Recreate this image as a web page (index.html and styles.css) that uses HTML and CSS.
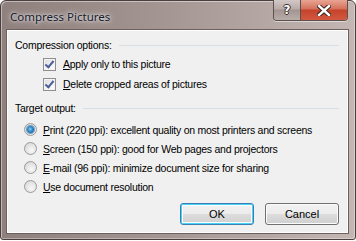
FILE: index.html
```html
<!DOCTYPE html>
<html lang="en">
<head>
  <meta charset="UTF-8" />
  <title>Compress Pictures</title>
  <link rel="stylesheet" href="styles.css">
</head>
<body>
  <div class="window">
    <div class="titlebar">
      <span class="title">Compress Pictures</span>
      <div class="caption-buttons">
        <span class="cap-btn help">?</span>
        <span class="cap-btn close">
          <svg width="14" height="11" viewBox="0 0 14 11">
            <path d="M2 1 L12 10 M12 1 L2 10" stroke="#3b2420" stroke-width="4.4" stroke-linecap="square"/>
            <path d="M2 1 L12 10 M12 1 L2 10" stroke="#fff" stroke-width="2.4" stroke-linecap="square"/>
          </svg>
        </span>
      </div>
    </div>

    <div class="client">
      <div class="group-head"><span>Compression options:</span><span class="rule"></span></div>
      <label class="option check-row">
        <span class="checkbox checked"></span>
        <span><u>A</u>pply only to this picture</span>
      </label>
      <label class="option check-row">
        <span class="checkbox checked"></span>
        <span><u>D</u>elete cropped areas of pictures</span>
      </label>

      <div class="group-head second"><span>Target output:</span><span class="rule"></span></div>
      <div class="radio-list">
        <label class="option radio-row">
          <span class="radio selected"></span>
          <span><u>P</u>rint (220 ppi): excellent quality on most printers and screens</span>
        </label>
        <label class="option radio-row">
          <span class="radio"></span>
          <span><u>S</u>creen (150 ppi): good for Web pages and projectors</span>
        </label>
        <label class="option radio-row">
          <span class="radio"></span>
          <span><u>E</u>-mail (96 ppi): minimize document size for sharing</span>
        </label>
        <label class="option radio-row">
          <span class="radio"></span>
          <span><u>U</u>se document resolution</span>
        </label>
      </div>

      <div class="buttons">
        <button class="btn default">OK</button>
        <button class="btn">Cancel</button>
      </div>
    </div>
  </div>
</body>
</html>
```

FILE: styles.css
```css
* {
  box-sizing: border-box;
  margin: 0;
  padding: 0;
}

body {
  width: 356px;
  height: 241px;
  background: #ffffff;
  font-family: "Liberation Sans", Arial, sans-serif;
  font-size: 10.5px;
  letter-spacing: -0.25px;
  color: #000;
  overflow: hidden;
}

.window {
  width: 356px;
  height: 240px;
  border: 1px solid #4a3f3d;
  border-radius: 6px 6px 3px 3px;
  background: linear-gradient(90deg, #8e807d 0%, #a39592 45%, #c4b7b3 100%);
  box-shadow: inset 1px 1px 0 rgba(255,255,255,0.45), inset -1px -1px 0 rgba(255,255,255,0.35);
  display: flex;
  flex-direction: column;
  padding: 0 7px 6px 6px;
}

.titlebar {
  height: 29px;
  display: flex;
  align-items: flex-start;
  justify-content: space-between;
}

.title {
  margin: 8px 0 0 3px;
  font-family: "Noto Sans", sans-serif;
  font-size: 11.5px;
  letter-spacing: 0;
  color: #15202f;
  text-shadow: 0 0 6px rgba(255,255,255,0.9), 0 0 3px rgba(255,255,255,0.8);
}

.caption-buttons {
  display: flex;
  margin-top: -1px;
  border: 1px solid #5c4f4c;
  border-top: none;
  border-radius: 0 0 4px 4px;
  overflow: hidden;
  box-shadow: 0 1px 0 rgba(255,255,255,0.5);
}

.cap-btn {
  height: 20px;
  display: flex;
  align-items: center;
  justify-content: center;
}

.help {
  width: 27px;
  background: linear-gradient(180deg, #d2c8c5 0%, #b8aba8 45%, #a29491 50%, #b9adaa 100%);
  border-right: 1px solid #5c4f4c;
  font-family: "DejaVu Sans", sans-serif;
  font-weight: bold;
  font-size: 12px;
  letter-spacing: 0;
  color: #fff;
  text-shadow: 1px 0 0 #3b2c2a, -1px 0 0 #3b2c2a, 0 1px 0 #3b2c2a, 0 -1px 0 #3b2c2a;
}

.close {
  width: 46px;
  background: linear-gradient(180deg, #e8a493 0%, #d4705b 45%, #c5432b 50%, #d2583f 100%);
}

.client {
  flex: 1;
  background: #f0f0f0;
  border: 1px solid #ffffff;
  box-shadow: 0 0 0 1px #6d605d;
  padding: 5px 8px 0 7px;
  display: flex;
  flex-direction: column;
}

.group-head {
  display: flex;
  align-items: center;
  height: 18px;
  gap: 7px;
}

.group-head.second {
  margin-top: 4px;
  height: 20px;
}

.rule {
  flex: 1;
  height: 1px;
  background: #d5dfe5;
}

.option {
  display: flex;
  align-items: center;
  white-space: nowrap;
}

.check-row {
  height: 20px;
  padding-left: 28px;
  gap: 7px;
}

.radio-list {
  margin-top: 2px;
  display: flex;
  flex-direction: column;
}

.radio-row {
  height: 19px;
  padding-left: 9px;
  gap: 6px;
}

.checkbox {
  width: 13px;
  height: 13px;
  border: 1px solid #8f8f8f;
  background: linear-gradient(135deg, #dcdcdc 0%, #f6f6f6 70%, #ffffff 100%);
  box-shadow: inset 0 0 0 1px #f4f4f4;
  display: flex;
  align-items: center;
  justify-content: center;
}

.checkbox.checked::after {
  content: "";
  width: 3px;
  height: 7px;
  border: solid #4a5f9b;
  border-width: 0 2px 2px 0;
  transform: translate(0, -1px) rotate(40deg);
}

.radio {
  width: 13px;
  height: 13px;
  border-radius: 50%;
  border: 1px solid #9a9a9a;
  background: radial-gradient(circle at 60% 65%, #f8f8f8 0%, #e3e3e3 55%, #cfcfcf 100%);
  display: flex;
  align-items: center;
  justify-content: center;
}

.radio.selected::after {
  content: "";
  width: 7px;
  height: 7px;
  border-radius: 50%;
  background: radial-gradient(circle at 45% 45%, #8fd0f5 0%, #2b87c9 45%, #0c4c8c 100%);
  box-shadow: 0 0 0 1px #6c9ab9;
}

.buttons {
  display: flex;
  justify-content: flex-end;
  gap: 11px;
  margin-top: 7px;
}

.btn {
  width: 74px;
  height: 22px;
  font-family: "Liberation Sans", Arial, sans-serif;
  font-size: 11px;
  color: #000;
  border: 1px solid #707070;
  border-radius: 3px;
  background: linear-gradient(180deg, #f2f2f2 0%, #ebebeb 50%, #dddddd 51%, #cfcfcf 100%);
  box-shadow: inset 0 0 0 1px #fcfcfc;
}

.btn.default {
  border-color: #3c7fb1;
  box-shadow: inset 0 0 0 1px #48d1f6, inset 0 0 0 2px #fcfcfc;
}

u {
  text-decoration: underline;
  text-underline-offset: 1px;
}
```
